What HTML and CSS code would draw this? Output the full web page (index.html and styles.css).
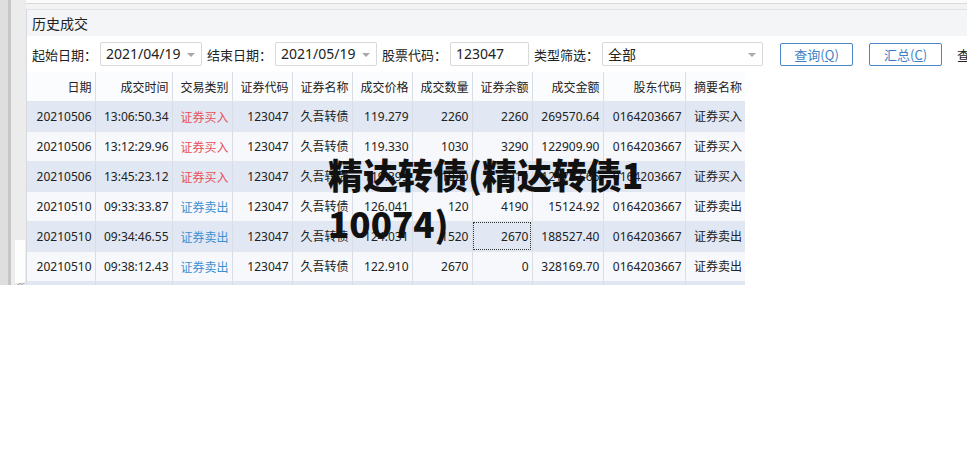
FILE: index.html
```html
<!DOCTYPE html>
<html lang="zh">
<head>
<meta charset="utf-8">
<link rel="stylesheet" href="styles.css">
</head>
<body>
<div class="app">
  <div class="side">
    <div class="side-a"></div>
    <div class="side-b"></div>
    <div class="side-c"><div class="side-box"></div><span class="side-arrows">&lt;&lt;</span></div>
  </div>
  <div class="main">
    <div class="topstrip"></div>
    <div class="panel">
      <div class="titlebar">历史成交</div>
      <div class="toolbar">
        <span class="lbl">起始日期：</span>
        <div class="combo w102"><span>2021/04/19</span><i class="arrow"></i></div>
        <span class="lbl">结束日期：</span>
        <div class="combo w102"><span>2021/05/19</span><i class="arrow"></i></div>
        <span class="lbl">股票代码：</span>
        <div class="combo w79"><span>123047</span></div>
        <span class="lbl">类型筛选：</span>
        <div class="combo w161"><span>全部</span><i class="arrow"></i></div>
        <button class="btn btn-q">查询(<u>Q</u>)</button>
        <button class="btn btn-c">汇总(<u>C</u>)</button>
        <span class="lbl lbl-more">查询</span>
      </div>
      <table class="grid">
        <colgroup>
          <col class="c68"><col class="c77"><col class="c60"><col class="c60"><col class="c60"><col class="c60"><col class="c60"><col class="c60"><col class="c71"><col class="c82"><col class="c60">
        </colgroup>
        <thead>
          <tr><th>日期</th><th>成交时间</th><th>交易类别</th><th>证券代码</th><th>证券名称</th><th>成交价格</th><th>成交数量</th><th>证券余额</th><th>成交金额</th><th>股东代码</th><th>摘要名称</th></tr>
        </thead>
        <tbody>
          <tr class="odd"><td>20210506</td><td>13:06:50.34</td><td class="buy">证券买入</td><td>123047</td><td>久吾转债</td><td>119.279</td><td>2260</td><td>2260</td><td>269570.64</td><td>0164203667</td><td>证券买入</td></tr>
          <tr class="even"><td>20210506</td><td>13:12:29.96</td><td class="buy">证券买入</td><td>123047</td><td>久吾转债</td><td>119.330</td><td>1030</td><td>3290</td><td>122909.90</td><td>0164203667</td><td>证券买入</td></tr>
          <tr class="odd"><td>20210506</td><td>13:45:23.12</td><td class="buy">证券买入</td><td>123047</td><td>久吾转债</td><td>119.399</td><td>1020</td><td>4310</td><td>121787.66</td><td>0164203667</td><td>证券买入</td></tr>
          <tr class="even"><td>20210510</td><td>09:33:33.87</td><td class="sell">证券卖出</td><td>123047</td><td>久吾转债</td><td>126.041</td><td>120</td><td>4190</td><td>15124.92</td><td>0164203667</td><td>证券卖出</td></tr>
          <tr class="odd"><td>20210510</td><td>09:34:46.55</td><td class="sell">证券卖出</td><td>123047</td><td>久吾转债</td><td>124.031</td><td>1520</td><td class="focus">2670</td><td>188527.40</td><td>0164203667</td><td>证券卖出</td></tr>
          <tr class="even"><td>20210510</td><td>09:38:12.43</td><td class="sell">证券卖出</td><td>123047</td><td>久吾转债</td><td>122.910</td><td>2670</td><td>0</td><td>328169.70</td><td>0164203667</td><td>证券卖出</td></tr>
          <tr class="odd"><td></td><td></td><td></td><td></td><td></td><td></td><td></td><td></td><td></td><td></td><td></td></tr>
        </tbody>
      </table>
    </div>
  </div>
  <div class="overlay">精达转债(精达转债110074)</div>
</div>
</body>
</html>
```

FILE: styles.css
```css
* { box-sizing: border-box; }
html, body { margin: 0; padding: 0; background: #ffffff; }
body {
  font-family: "Noto Sans", "Noto Sans CJK SC", sans-serif;
  color: #222;
}
.app {
  position: relative;
  display: flex;
  height: 285px;
  overflow: hidden;
}
.side { display: flex; width: 26px; flex: none; }
.side-a { width: 8px; background: #dedede; }
.side-b { width: 3px; background: #c6c6c6; }
.side-c {
  position: relative;
  width: 15px;
  background: #ececec;
  display: flex;
  flex-direction: column;
  justify-content: flex-end;
  padding-bottom: 2px;
}
.side-box { width: 10px; height: 43px; margin-left: 4px; background: #fdfdfd; }
.side-arrows {
  position: absolute;
  left: 6px;
  bottom: -4px;
  font-size: 8px;
  line-height: 8px;
  color: #888;
  letter-spacing: -1px;
}
.main { flex: 1; display: flex; flex-direction: column; min-width: 0; }
.topstrip {
  height: 9px;
  background: #f3f3f3;
  border-top: 3px solid #fbfbfb;
  box-shadow: inset 0 1px 0 #dadada;
  flex: none;
}
.panel {
  flex: 1;
  background: #ffffff;
  border-left: 1px solid #d6d9de;
  border-top: 1px solid #dfe2e6;
}
.titlebar {
  height: 26px;
  background: #f4f5f7;
  font-size: 14px;
  line-height: 26px;
  padding-left: 5px;
  font-family: "Noto Sans CJK SC", sans-serif;
  color: #222;
}
.toolbar {
  height: 36px;
  display: flex;
  align-items: center;
  padding-left: 5px;
  white-space: nowrap;
}
.lbl {
  font-family: "Noto Sans CJK SC", sans-serif;
  font-size: 13px;
  color: #222;
  margin-right: 3px;
}
.lbl-more { margin-left: 15px; }
.combo {
  position: relative;
  height: 24px;
  border: 1px solid #d9d9d9;
  border-radius: 2px;
  background: #fff;
  font-size: 14px;
  line-height: 22px;
  padding-left: 5px;
  margin-right: 5px;
  flex: none;
}
.w102 { width: 102px; }
.w79 { width: 79px; }
.w161 { width: 161px; font-family: "Noto Sans CJK SC", sans-serif; }
.arrow {
  position: absolute;
  right: 6px;
  top: 10px;
  width: 0;
  height: 0;
  border-left: 4px solid transparent;
  border-right: 4px solid transparent;
  border-top: 4px solid #a8a8a8;
}
.btn {
  height: 23px;
  width: 73px;
  border: 1px solid #4b87c6;
  border-radius: 2px;
  background: #fff;
  color: #3c7fc6;
  font-family: "Noto Sans CJK SC", sans-serif;
  font-size: 13px;
  padding: 0;
  flex: none;
}
.btn-q { margin-left: 12px; }
.btn-c { margin-left: 16px; }
.grid {
  border-collapse: collapse;
  table-layout: fixed;
  width: 718px;
  font-size: 12px;
}
.c68 { width: 68px; }
.c77 { width: 77px; }
.c60 { width: 60px; }
.c71 { width: 71px; }
.c82 { width: 82px; }
.grid th, .grid td {
  height: 30px;
  padding: 0 3px 0 0;
  text-align: right;
  white-space: nowrap;
  overflow: hidden;
  border-left: 1px solid #d8dde6;
  border-bottom: 1px solid #e2e7ef;
}
.grid th:first-child, .grid td:first-child { border-left: none; }
.grid th {
  font-weight: normal;
  height: 29px;
  background: #fbfcfd;
  font-family: "Noto Sans CJK SC", sans-serif;
  color: #222;
}
.grid thead th { border-bottom: 1px solid #e2e6ec; }
.odd td { background: #e1e8f4; }
.even td { background: #f6f8fc; }
.buy { color: #e8505a; font-family: "Noto Sans CJK SC", sans-serif; }
.sell { color: #3b90d2; font-family: "Noto Sans CJK SC", sans-serif; }
.grid td.focus { outline: 1px dotted #333; outline-offset: -2px; }
.overlay {
  position: absolute;
  left: 328px;
  top: 149px;
  width: 320px;
  font-family: "Noto Sans CJK SC", sans-serif;
  font-weight: 900;
  font-size: 35px;
  line-height: 49px;
  color: #111;
  word-break: break-all;
}
```
